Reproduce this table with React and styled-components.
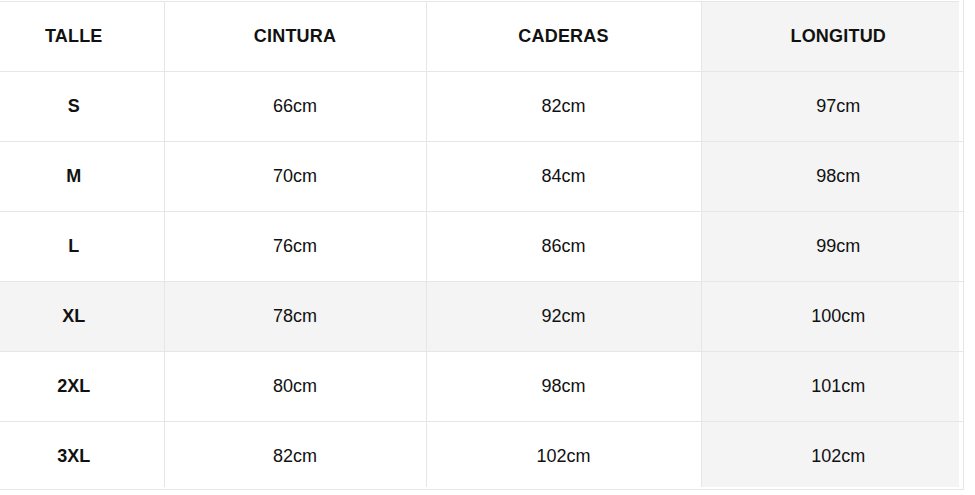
import React from "react";
import styled, { createGlobalStyle } from "styled-components";

const Global = createGlobalStyle`
  html, body { margin: 0; padding: 0; background: #fff; }
  body { font-family: "Liberation Sans", Arial, sans-serif; color: #111; }
`;

const LINE = "#e6e6e6";
const GREY = "#f4f4f4";

const Frame = styled.div`
  width: 963px;
  height: 488px;
  border-right: 1px solid ${LINE};
  border-bottom: 1px solid ${LINE};
  box-sizing: content-box;
  padding-top: 1px;
`;

const Scroller = styled.div`
  height: 486px;
  overflow: hidden;
`;

const Table = styled.table`
  border-collapse: collapse;
  table-layout: fixed;
  width: 963px;
`;

const Cell = styled.td`
  height: 70px;
  padding: 0;
  box-sizing: border-box;
  text-align: center;
  vertical-align: middle;
  font-size: 18px;
  font-weight: ${(p) => (p.$bold ? 700 : 400)};
  background: ${(p) => (p.$grey ? GREY : "#fff")};
  border-bottom: 1px solid ${LINE};
  border-left: ${(p) => (p.$first ? "none" : `1px solid ${LINE}`)};
  border-top: ${(p) => (p.$top ? `1px solid ${LINE}` : "none")};
  padding-right: ${(p) => (p.$first ? "16px" : "0")};
  padding-left: ${(p) => (p.$last ? "16px" : "0")};
`;

const HeadCell = styled(Cell).attrs({ as: "th" })`
  font-weight: 700;
  letter-spacing: 0.2px;
`;

const Spacer = styled.td`
  padding: 0;
  background: #fff;
  border-bottom: 1px solid ${LINE};
`;

const rows = [
  ["S", "66cm", "82cm", "97cm"],
  ["M", "70cm", "84cm", "98cm"],
  ["L", "76cm", "86cm", "99cm"],
  ["XL", "78cm", "92cm", "100cm", true],
  ["2XL", "80cm", "98cm", "101cm"],
  ["3XL", "82cm", "102cm", "102cm"],
];

export default function App() {
  return (
    <>
      <Global />
      <Frame>
        <Scroller>
          <Table>
            <colgroup>
              <col style={{ width: 164 }} />
              <col style={{ width: 262 }} />
              <col style={{ width: 275 }} />
              <col style={{ width: 258 }} />
              <col style={{ width: 4 }} />
            </colgroup>
            <thead>
              <tr>
                <HeadCell $first $top>TALLE</HeadCell>
                <HeadCell $top>CINTURA</HeadCell>
                <HeadCell $top>CADERAS</HeadCell>
                <HeadCell $top $last $grey>LONGITUD</HeadCell>
                <Spacer />
              </tr>
            </thead>
            <tbody>
              {rows.map(([size, w, h, l, shaded]) => (
                <tr key={size}>
                  <Cell $first $bold $grey={shaded}>{size}</Cell>
                  <Cell $grey={shaded}>{w}</Cell>
                  <Cell $grey={shaded}>{h}</Cell>
                  <Cell $last $grey>{l}</Cell>
                  <Spacer />
                </tr>
              ))}
            </tbody>
          </Table>
        </Scroller>
      </Frame>
    </>
  );
}
